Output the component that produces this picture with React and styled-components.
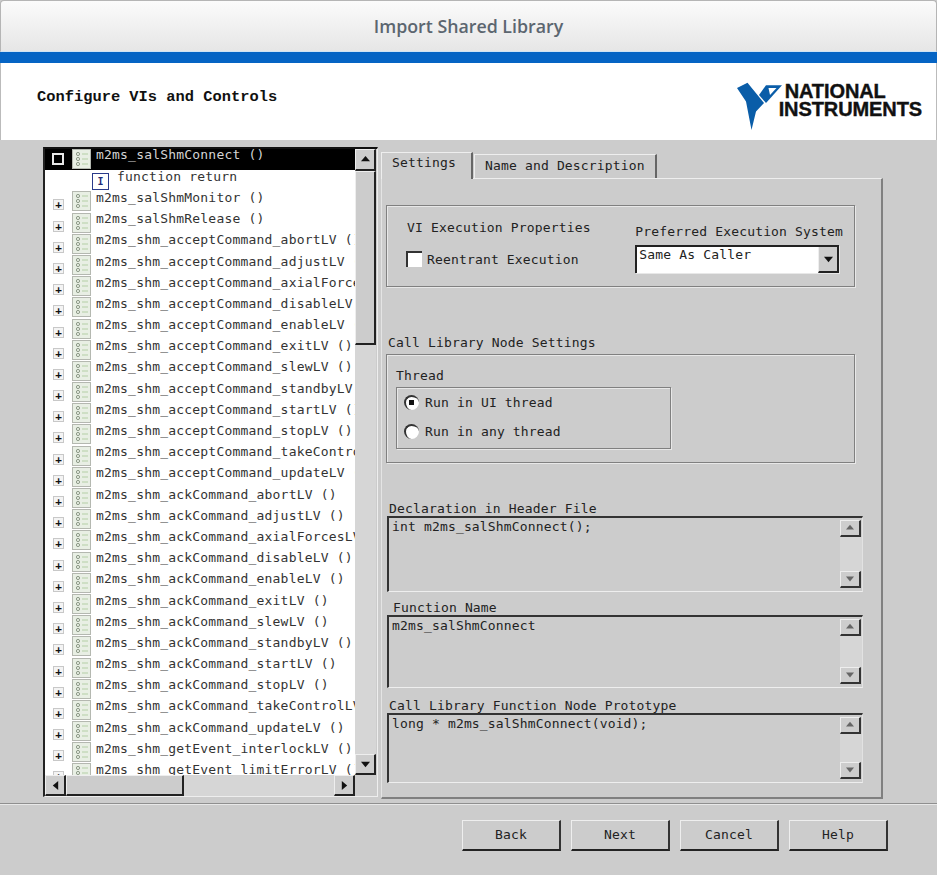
import React from "react";
import styled, { createGlobalStyle } from "styled-components";

const GlobalStyle = createGlobalStyle`
  html, body {
    margin: 0;
    padding: 0;
    background: #cccccc;
  }
  * {
    box-sizing: border-box;
  }
`;

const functions = [
  "m2ms_salShmMonitor ()",
  "m2ms_salShmRelease ()",
  "m2ms_shm_acceptCommand_abortLV ()",
  "m2ms_shm_acceptCommand_adjustLV ()",
  "m2ms_shm_acceptCommand_axialForcesLV ()",
  "m2ms_shm_acceptCommand_disableLV ()",
  "m2ms_shm_acceptCommand_enableLV ()",
  "m2ms_shm_acceptCommand_exitLV ()",
  "m2ms_shm_acceptCommand_slewLV ()",
  "m2ms_shm_acceptCommand_standbyLV ()",
  "m2ms_shm_acceptCommand_startLV ()",
  "m2ms_shm_acceptCommand_stopLV ()",
  "m2ms_shm_acceptCommand_takeControlLV ()",
  "m2ms_shm_acceptCommand_updateLV ()",
  "m2ms_shm_ackCommand_abortLV ()",
  "m2ms_shm_ackCommand_adjustLV ()",
  "m2ms_shm_ackCommand_axialForcesLV ()",
  "m2ms_shm_ackCommand_disableLV ()",
  "m2ms_shm_ackCommand_enableLV ()",
  "m2ms_shm_ackCommand_exitLV ()",
  "m2ms_shm_ackCommand_slewLV ()",
  "m2ms_shm_ackCommand_standbyLV ()",
  "m2ms_shm_ackCommand_startLV ()",
  "m2ms_shm_ackCommand_stopLV ()",
  "m2ms_shm_ackCommand_takeControlLV ()",
  "m2ms_shm_ackCommand_updateLV ()",
  "m2ms_shm_getEvent_interlockLV ()",
  "m2ms_shm_getEvent_limitErrorLV ()",
];

const mono = `"DejaVu Sans Mono", "Liberation Mono", monospace`;

const FileIcon = () => (
  <IconSvg width="19" height="20" viewBox="0 0 19 20">
    <rect x="0.5" y="0.5" width="18" height="19" fill="#e8efe4" stroke="#b4b8b0" />
    <circle cx="6" cy="5" r="1.6" fill="none" stroke="#8d9a88" />
    <circle cx="6" cy="10" r="1.6" fill="none" stroke="#8d9a88" />
    <circle cx="6" cy="15" r="1.6" fill="none" stroke="#8d9a88" />
    <path d="M10 5h6M10 10h6M10 15h6" stroke="#b4cfa6" />
  </IconSvg>
);

const Arrow = ({ dir, color = "#111", size = 9 }) => {
  const points = {
    up: "0,7 10,7 5,1",
    down: "0,2 10,2 5,8",
    left: "8,0 8,10 2,5",
    right: "2,0 2,10 8,5",
  };
  return (
    <svg width={size} height={size} viewBox="0 0 10 10">
      <polygon points={points[dir]} fill={color} />
    </svg>
  );
};

const Logo = () => (
  <svg width="48" height="50" viewBox="0 0 48 50">
    <path d="M2 6 L12.5 0.7 L29 21 L21 29.5 L16.5 48 L11 19.5 Z" fill="#0a5da8" />
    <path d="M24 13 L31 3.3 H47 L31 21 Z" fill="#0a5da8" />
    <path d="M33.5 6 H41.5 L35 13 Z" fill="#ffffff" />
  </svg>
);

const App = () => {
  return (
    <Page>
      <GlobalStyle />
      <TitleBar>Import Shared Library</TitleBar>
      <BlueBar />
      <Banner>
        <BannerTitle>Configure VIs and Controls</BannerTitle>
        <LogoWrap>
          <Logo />
          <LogoText>
            <LogoLine $indent={6}>NATIONAL</LogoLine>
            <LogoLine>INSTRUMENTS</LogoLine>
          </LogoText>
        </LogoWrap>
      </Banner>

      <Body>
        <TreePanel>
          <TreeList>
            <SelectedRow>
              <CollapseBox />
              <FileIcon />
              <SelectedLabel>m2ms_salShmConnect ()</SelectedLabel>
            </SelectedRow>
            <ChildRow>
              <ReturnIcon>I</ReturnIcon>
              <RowLabel>function return</RowLabel>
            </ChildRow>
            {functions.map((name) => (
              <TreeRow key={name}>
                <ExpandBox>+</ExpandBox>
                <FileIcon />
                <RowLabel>{name}</RowLabel>
              </TreeRow>
            ))}
          </TreeList>
          <VScroll>
            <ScrollButton $w={21} $h={22}>
              <Arrow dir="up" />
            </ScrollButton>
            <VThumb />
            <ScrollTrack />
            <ScrollButton $w={21} $h={21}>
              <Arrow dir="down" />
            </ScrollButton>
          </VScroll>
          <HScroll>
            <ScrollButton $w={21} $h={21}>
              <Arrow dir="left" />
            </ScrollButton>
            <HThumb />
            <ScrollTrack />
            <ScrollButton $w={21} $h={21}>
              <Arrow dir="right" />
            </ScrollButton>
          </HScroll>
        </TreePanel>

        <RightColumn>
          <TabStrip>
            <ActiveTab>Settings</ActiveTab>
            <Tab>Name and Description</Tab>
          </TabStrip>
          <TabPanel>
            <PropertiesBox>
              <PropertiesLeft>
                <Label>VI Execution Properties</Label>
                <CheckRow>
                  <CheckBox />
                  <Label>Reentrant Execution</Label>
                </CheckRow>
              </PropertiesLeft>
              <PropertiesRight>
                <Label>Preferred Execution System</Label>
                <Select>
                  <SelectValue>Same As Caller</SelectValue>
                  <SelectButton>
                    <Arrow dir="down" />
                  </SelectButton>
                </Select>
              </PropertiesRight>
            </PropertiesBox>

            <SectionTitle>Call Library Node Settings</SectionTitle>
            <NodeBox>
              <Label>Thread</Label>
              <RadioBox>
                <RadioRow>
                  <Radio $checked />
                  <Label>Run in UI thread</Label>
                </RadioRow>
                <RadioRow>
                  <Radio />
                  <Label>Run in any thread</Label>
                </RadioRow>
              </RadioBox>
            </NodeBox>

            <FieldTitle $top={38}>Declaration in Header File</FieldTitle>
            <TextField $h={76} value="int m2ms_salShmConnect();" />
            <FieldTitle $top={8} $indent={7}>Function Name</FieldTitle>
            <TextField $h={73} value="m2ms_salShmConnect" />
            <FieldTitle $top={10}>Call Library Function Node Prototype</FieldTitle>
            <TextField $h={70} value="long * m2ms_salShmConnect(void);" />
          </TabPanel>
        </RightColumn>
      </Body>

      <Footer>
        <WizardButton>Back</WizardButton>
        <WizardButton>Next</WizardButton>
        <WizardButton>Cancel</WizardButton>
        <WizardButton>Help</WizardButton>
      </Footer>
    </Page>
  );
};

const TextField = ({ $h, value }) => (
  <FieldFrame $h={$h}>
    <FieldText>{value}</FieldText>
    <FieldScroll>
      <SmallButton>
        <Arrow dir="up" color="#666" size={8} />
      </SmallButton>
      <ScrollTrack />
      <SmallButton>
        <Arrow dir="down" color="#666" size={8} />
      </SmallButton>
    </FieldScroll>
  </FieldFrame>
);

export default App;

const Page = styled.div`
  width: 937px;
  height: 875px;
  background: #cccccc;
  font-family: ${mono};
  overflow: hidden;
`;

const IconSvg = styled.svg`
  flex: none;
`;

const TitleBar = styled.div`
  height: 52px;
  display: flex;
  align-items: center;
  justify-content: center;
  background: linear-gradient(#fbfbfb, #e6e6e6);
  border: 1px solid #b5b5b5;
  border-bottom: 1px solid #cfe4f5;
  border-radius: 4px 4px 0 0;
  font-family: "Open Sans", "Liberation Sans", sans-serif;
  font-weight: 600;
  font-size: 17.8px;
  color: #5c6670;
`;

const BlueBar = styled.div`
  height: 11px;
  background: #0564c4;
`;

const Banner = styled.div`
  height: 77px;
  background: #ffffff;
  display: flex;
  align-items: center;
  justify-content: space-between;
  padding: 0 14px 9px 36px;
  border-left: 1px solid #bbb;
  border-right: 1px solid #bbb;
`;

const BannerTitle = styled.div`
  font-family: "Liberation Mono", monospace;
  font-weight: 700;
  font-size: 15.4px;
  color: #111;
`;

const LogoWrap = styled.div`
  display: flex;
  align-items: flex-start;
  margin-top: 19px;
`;

const LogoText = styled.div`
  margin-left: -4px;
  font-family: "Liberation Sans", Arial, sans-serif;
  font-weight: 700;
  color: #111;
`;

const LogoLine = styled.div`
  padding-left: ${(p) => p.$indent || 0}px;
  font-size: 20px;
  line-height: 18px;
  letter-spacing: -0.1px;
  -webkit-text-stroke: 0.4px #111;
`;

const Body = styled.div`
  display: flex;
  height: 664px;
  padding: 7px 0 0 43px;
  border-bottom: 1px solid #8f8f8f;
  box-shadow: 0 1px 0 #e8e8e8;
`;

const TreePanel = styled.div`
  width: 335px;
  height: 650px;
  display: grid;
  grid-template-columns: 310px 21px;
  grid-template-rows: 626px 21px;
  border-top: 2px solid #111;
  border-right: 1px solid #eee;
  border-bottom: 1px solid #eee;
  border-left: 2px solid #222;
`;

const TreeList = styled.div`
  background: #ffffff;
  overflow: hidden;
  font-size: 13px;
`;

const TreeRow = styled.div`
  height: 21.2px;
  display: flex;
  align-items: flex-start;
  padding-left: 8px;
  color: #333;
  white-space: nowrap;
`;

const SelectedRow = styled(TreeRow)`
  padding-left: 7px;
  background: #000000;
  color: #d4d4d4;
`;

const ChildRow = styled(TreeRow)`
  padding-left: 47px;
`;

const RowLabel = styled.span`
  margin-left: 5px;
  margin-top: -2.4px;
  line-height: 17px;
  letter-spacing: 0.2px;
`;

const SelectedLabel = styled(RowLabel)`
  margin-top: -3px;
`;

const ExpandBox = styled.span`
  flex: none;
  width: 11px;
  height: 11px;
  margin: 8px 8px 0 0;
  display: flex;
  align-items: center;
  justify-content: center;
  background: #f4f4f4;
  border: 1px solid #c8c8c8;
  color: #111;
  font-size: 11px;
  font-weight: 700;
  line-height: 1;
`;

const CollapseBox = styled.span`
  flex: none;
  width: 12px;
  height: 12px;
  margin: 4px 8px 0 0;
  background: #000;
  border: 2px solid #e8e8e8;
`;

const ReturnIcon = styled.span`
  flex: none;
  width: 17px;
  height: 17px;
  margin: 3px 3px 0 0;
  display: flex;
  align-items: center;
  justify-content: center;
  border: 1px solid #2a3a8a;
  color: #1e2a78;
  font-size: 10px;
  font-weight: 700;
`;

const ScrollButton = styled.div`
  flex: none;
  width: ${(p) => p.$w}px;
  height: ${(p) => p.$h}px;
  display: flex;
  align-items: center;
  justify-content: center;
  background: #cdcdcd;
  border-style: solid;
  border-width: 1px 2px 2px 1px;
  border-color: #eeeeee #222222 #222222 #eeeeee;
`;

const ScrollTrack = styled.div`
  flex: 1;
  background-color: #d6d6d6;
  background-image: radial-gradient(#b4b4b4 0.6px, transparent 0.7px);
  background-size: 2px 2px;
`;

const VScroll = styled.div`
  display: flex;
  flex-direction: column;
`;

const VThumb = styled.div`
  height: 174px;
  background: #cccccc;
  border-style: solid;
  border-width: 1px 2px 2px 1px;
  border-color: #eeeeee #222222 #222222 #eeeeee;
`;

const HScroll = styled.div`
  display: flex;
`;

const HThumb = styled.div`
  width: 118px;
  background: #cccccc;
  border-style: solid;
  border-width: 1px 2px 2px 1px;
  border-color: #eeeeee #222222 #222222 #eeeeee;
`;

const RightColumn = styled.div`
  width: 503px;
  margin-left: 3px;
  display: flex;
  flex-direction: column;
`;

const TabStrip = styled.div`
  height: 31px;
  display: flex;
  align-items: flex-end;
  flex: none;
`;

const Tab = styled.div`
  height: 24px;
  padding: 3px 10px 0 10px;
  margin-left: 1px;
  font-size: 13px;
  color: #222;
  background: #cccccc;
  border-top: 1px solid #eeeeee;
  border-left: 1px solid #eeeeee;
  border-right: 2px solid #666666;
  letter-spacing: 0.16px;
`;

const ActiveTab = styled(Tab)`
  position: relative;
  z-index: 1;
  height: 27px;
  width: 92px;
  padding: 2px 0 0 10px;
  margin-left: 0;
  margin-bottom: -1px;
`;

const TabPanel = styled.div`
  width: 502px;
  height: 621px;
  padding: 26px 0 0 4px;
  border-top: 1px solid #eeeeee;
  border-right: 2px solid #808080;
  border-bottom: 2px solid #808080;
  border-left: 1px solid #e4e4e4;
  font-size: 13px;
  color: #222;
`;

const Label = styled.span`
  font-size: 13px;
  letter-spacing: 0.16px;
  color: #222;
  white-space: nowrap;
`;

const GroupBox = styled.div`
  border: 1px solid #808080;
  box-shadow: 1px 1px 0 #e8e8e8, inset 1px 1px 0 #e8e8e8;
`;

const PropertiesBox = styled(GroupBox)`
  width: 469px;
  height: 82px;
  display: flex;
  justify-content: space-between;
  padding: 14px 11px 0 20px;
`;

const PropertiesLeft = styled.div`
  display: flex;
  flex-direction: column;
  gap: 16px;
`;

const CheckRow = styled.div`
  display: flex;
  align-items: center;
  gap: 5px;
  margin-left: -1px;
`;

const CheckBox = styled.span`
  width: 16px;
  height: 16px;
  background: #ffffff;
  border-style: solid;
  border-width: 2px 0 0 2px;
  border-color: #333333;
`;

const PropertiesRight = styled.div`
  display: flex;
  flex-direction: column;
  gap: 6px;
  padding-top: 4px;
`;

const Select = styled.div`
  width: 204px;
  height: 28px;
  display: flex;
  background: #ffffff;
  border-style: solid;
  border-width: 2px 0 0 2px;
  border-color: #222222;
  box-shadow: 1px 1px 0 #e8e8e8;
`;

const SelectValue = styled.span`
  flex: 1;
  padding: 0 0 0 2px;
  font-size: 13px;
  line-height: 15px;
  letter-spacing: 0.16px;
  color: #222;
`;

const SelectButton = styled.span`
  width: 21px;
  display: flex;
  align-items: center;
  justify-content: center;
  background: #cccccc;
  border-style: solid;
  border-width: 0 2px 2px 1px;
  border-color: #222222;
  border-left-color: #eeeeee;
`;

const SectionTitle = styled.div`
  margin: 47px 0 3px 2px;
  line-height: 17px;
  letter-spacing: 0.16px;
`;

const NodeBox = styled(GroupBox)`
  width: 469px;
  height: 109px;
  padding: 13px 0 0 9px;
  display: flex;
  flex-direction: column;
  align-items: flex-start;
  gap: 4px;
`;

const RadioBox = styled(GroupBox)`
  width: 275px;
  height: 62px;
  padding: 0 0 0 7px;
  display: flex;
  flex-direction: column;
`;

const RadioRow = styled.div`
  height: 29px;
  display: flex;
  align-items: center;
  gap: 6px;
`;

const Radio = styled.span`
  position: relative;
  width: 15px;
  height: 15px;
  flex: none;
  border-radius: 50%;
  background: #ffffff;
  border-style: solid;
  border-width: 2px 0 0 2px;
  border-color: #333333;
  &::after {
    content: "";
    display: ${(p) => (p.$checked ? "block" : "none")};
    position: absolute;
    left: 3px;
    top: 3px;
    width: 5px;
    height: 5px;
    background: #111111;
  }
`;

const FieldTitle = styled.div`
  margin: ${(p) => p.$top}px 0 0 ${(p) => p.$indent || 3}px;
  line-height: 15px;
  letter-spacing: 0.16px;
`;

const FieldFrame = styled.div`
  width: 476px;
  height: ${(p) => p.$h}px;
  margin-left: 1px;
  display: flex;
  background: #cccccc;
  border-top: 2px solid #333333;
  border-left: 2px solid #333333;
  border-bottom: 1px solid #eeeeee;
  border-right: 1px solid #e2e2e2;
`;

const FieldText = styled.div`
  flex: 1;
  padding: 1px 0 0 3px;
  font-size: 13px;
  line-height: 15px;
  letter-spacing: 0.16px;
  color: #222;
`;

const FieldScroll = styled.div`
  width: 22px;
  display: flex;
  flex-direction: column;
  padding: 2px 0 3px;
`;

const SmallButton = styled.div`
  flex: none;
  width: 21px;
  height: 17px;
  display: flex;
  align-items: center;
  justify-content: center;
  background: #cdcdcd;
  border-style: solid;
  border-width: 1px 2px 2px 1px;
  border-color: #eeeeee #333333 #333333 #eeeeee;
`;

const Footer = styled.div`
  display: flex;
  gap: 10px;
  padding: 16px 0 0 462px;
`;

const WizardButton = styled.div`
  width: 99px;
  height: 31px;
  display: flex;
  align-items: center;
  justify-content: center;
  padding-bottom: 2px;
  background: #cccccc;
  font-size: 13px;
  color: #222;
  letter-spacing: 0.16px;
  border-style: solid;
  border-width: 1px 2px 2px 1px;
  border-color: #eeeeee #333333 #222222 #eeeeee;
`;
